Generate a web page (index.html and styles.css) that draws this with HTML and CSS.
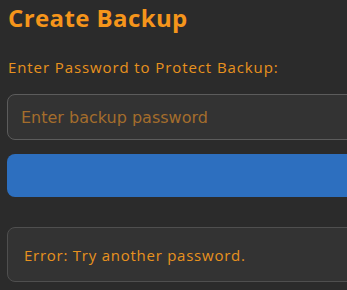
FILE: index.html
```html
<!DOCTYPE html>
<html>
<head>
<meta charset="utf-8">
<link rel="stylesheet" href="styles.css">
</head>
<body>
<div class="page">
  <h1 class="title">Create Backup</h1>
  <label class="label" for="pw">Enter Password to Protect Backup:</label>
  <input id="pw" class="input" type="password" placeholder="Enter backup password">
  <button class="btn" type="button"></button>
  <div class="error">Error: Try another password.</div>
</div>
</body>
</html>
```
FILE: styles.css
```css
html, body {
  margin: 0;
  padding: 0;
  background: #2b2b2b;
  overflow: hidden;
}
.page {
  width: 380px;
  padding: 0 0 0 7px;
  display: flex;
  flex-direction: column;
  font-family: "Open Sans", sans-serif;
}
.title {
  margin: 0;
  padding: 3px 0 0 1px;
  font-size: 24px;
  line-height: 30px;
  font-weight: 700;
  letter-spacing: 0.4px;
  color: #f5951b;
}
.label {
  margin-top: 24px;
  padding-left: 1px;
  font-size: 15px;
  line-height: 20px;
  letter-spacing: 0.9px;
  color: #e8921e;
}
.input {
  margin-top: 17px;
  height: 46px;
  box-sizing: border-box;
  border: 1px solid #5c5c5c;
  border-radius: 8px;
  background: #333333;
  padding: 0 13px;
  font-family: "DejaVu Sans", sans-serif;
  font-size: 16px;
  color: #e8921e;
  outline: none;
}
.input::placeholder {
  color: #a46d2c;
}
.btn {
  margin-top: 14px;
  height: 43px;
  border: none;
  border-radius: 8px;
  background: #2d6fbf;
}
.error {
  margin-top: 30px;
  height: 55px;
  box-sizing: border-box;
  border: 1px solid #4f4f4f;
  border-radius: 8px;
  background: #333333;
  display: flex;
  align-items: center;
  padding: 0 16px;
  font-size: 15px;
  letter-spacing: 0.75px;
  color: #e8921e;
}
```
